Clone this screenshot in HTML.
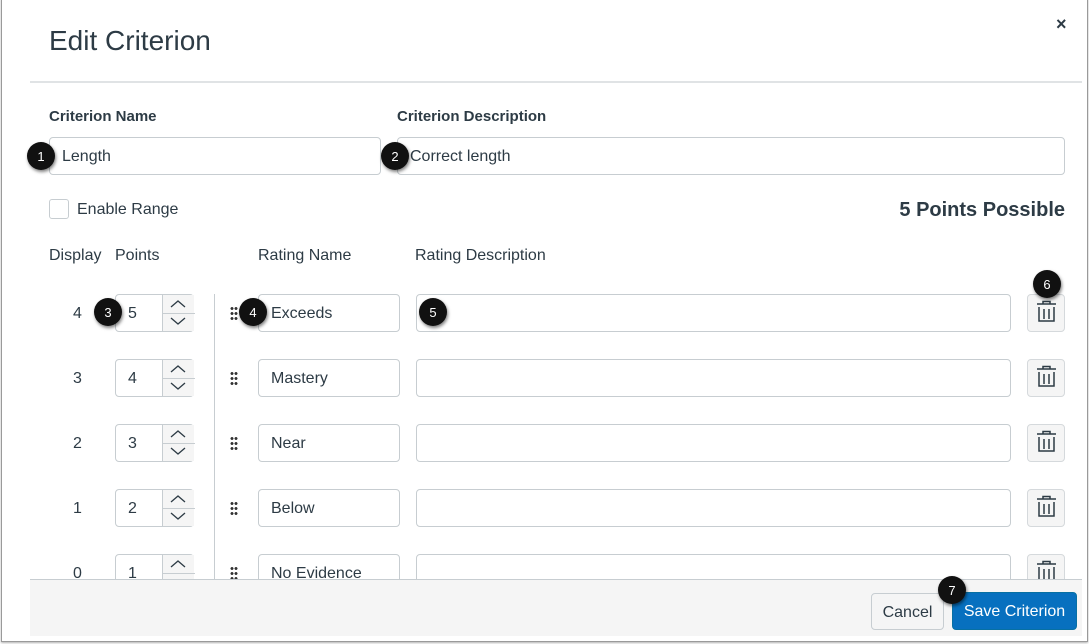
<!DOCTYPE html>
<html><head><meta charset="utf-8"><style>
*{box-sizing:border-box;margin:0;padding:0}
body{width:1089px;height:644px;background:#fff;font-family:"Liberation Sans",sans-serif;color:#2d3b45;position:relative;overflow:hidden}
.a{position:absolute}
.frame{left:1px;top:-2px;width:1087px;height:644px;border:1px solid #9a9a9a;box-shadow:0 1px 2px rgba(0,0,0,.3)}
.inp{position:absolute;border:1px solid #c7cdd1;border-radius:4px;background:#fff;font-size:16px;padding-left:12px;padding-top:2px;display:flex;align-items:center}
.lbl{position:absolute;font-size:15px;font-weight:bold}
.b{position:absolute;width:28px;height:28px;border-radius:50%;background:#111;color:#fff;font-size:13px;display:flex;align-items:center;justify-content:center;box-shadow:1px 2px 3px rgba(0,0,0,.5);z-index:5}
.hd{position:absolute;font-size:16px;color:#2d3b45}
.spin{position:absolute;width:79px;height:38px;border:1px solid #c7cdd1;border-radius:4px;background:#fff}
.spin .n{position:absolute;left:12px;top:10px;font-size:16px}
.spin .c{position:absolute;left:46px;top:0;width:32px;height:36px;border-left:1px solid #c7cdd1;background:#f5f5f5}
.spin .c i{position:absolute;left:0;top:18px;width:32px;border-top:1px solid #c7cdd1}
.tr{position:absolute;width:38px;height:38px;border:1px solid #d5d9dc;border-radius:4px;background:#f5f5f5}
.dots{position:absolute;width:8px;height:15px;background-image:radial-gradient(circle,#333 1.3px,transparent 1.6px);background-size:4px 5px}
</style></head><body>
<div class="a frame"></div>
<div class="a" style="left:49px;top:25px;font-size:28px;color:#2d3b45">Edit Criterion</div>
<div class="a" style="left:1056px;top:14px;font-size:18px;font-weight:bold">×</div>
<div class="a" style="left:30px;top:81px;width:1052px;border-top:2px solid #e0e3e5"></div>
<div class="lbl" style="left:49px;top:108px">Criterion Name</div>
<div class="lbl" style="left:397px;top:108px">Criterion Description</div>
<div class="inp" style="left:49px;top:137px;width:332px;height:38px">Length</div>
<div class="inp" style="left:397px;top:137px;width:668px;height:38px">Correct length</div>
<div class="b" style="left:27px;top:142px">1</div>
<div class="b" style="left:381px;top:142px">2</div>
<div class="a" style="left:49px;top:199px;width:20px;height:20px;border:1px solid #c7cdd1;border-radius:3px"></div>
<div class="a" style="left:77px;top:201px;font-size:16px">Enable Range</div>
<div class="a" style="right:24px;top:199px;font-size:20px;font-weight:bold">5 Points Possible</div>
<div class="hd" style="left:49px;top:247px">Display</div>
<div class="hd" style="left:115px;top:247px">Points</div>
<div class="hd" style="left:258px;top:247px">Rating Name</div>
<div class="hd" style="left:415px;top:247px">Rating Description</div>
<div class="a" style="left:214px;top:294px;height:290px;border-left:1px solid #c7cdd1"></div>

<div class="a" style="left:0;top:0;width:1089px;height:579px;overflow:hidden">
<div style="position:absolute;left:0;top:294px">
 <div class="hd" style="left:73px;top:11px">4</div>
 <div class="spin" style="left:115px;top:0"><div class="n">5</div><div class="c"><i></i></div></div>
 <div class="dots" style="left:230px;top:12px"></div>
 <div class="inp" style="left:258px;top:0;width:142px;height:38px">Exceeds</div>
 <div class="inp" style="left:416px;top:0;width:595px;height:38px"></div>
 <div class="tr" style="left:1027px;top:0"></div>
</div>
<div style="position:absolute;left:0;top:359px">
 <div class="hd" style="left:73px;top:11px">3</div>
 <div class="spin" style="left:115px;top:0"><div class="n">4</div><div class="c"><i></i></div></div>
 <div class="dots" style="left:230px;top:12px"></div>
 <div class="inp" style="left:258px;top:0;width:142px;height:38px">Mastery</div>
 <div class="inp" style="left:416px;top:0;width:595px;height:38px"></div>
 <div class="tr" style="left:1027px;top:0"></div>
</div>
<div style="position:absolute;left:0;top:424px">
 <div class="hd" style="left:73px;top:11px">2</div>
 <div class="spin" style="left:115px;top:0"><div class="n">3</div><div class="c"><i></i></div></div>
 <div class="dots" style="left:230px;top:12px"></div>
 <div class="inp" style="left:258px;top:0;width:142px;height:38px">Near</div>
 <div class="inp" style="left:416px;top:0;width:595px;height:38px"></div>
 <div class="tr" style="left:1027px;top:0"></div>
</div>
<div style="position:absolute;left:0;top:489px">
 <div class="hd" style="left:73px;top:11px">1</div>
 <div class="spin" style="left:115px;top:0"><div class="n">2</div><div class="c"><i></i></div></div>
 <div class="dots" style="left:230px;top:12px"></div>
 <div class="inp" style="left:258px;top:0;width:142px;height:38px">Below</div>
 <div class="inp" style="left:416px;top:0;width:595px;height:38px"></div>
 <div class="tr" style="left:1027px;top:0"></div>
</div>
<div style="position:absolute;left:0;top:554px">
 <div class="hd" style="left:73px;top:11px">0</div>
 <div class="spin" style="left:115px;top:0"><div class="n">1</div><div class="c"><i></i></div></div>
 <div class="dots" style="left:230px;top:12px"></div>
 <div class="inp" style="left:258px;top:0;width:142px;height:38px">No Evidence</div>
 <div class="inp" style="left:416px;top:0;width:595px;height:38px"></div>
 <div class="tr" style="left:1027px;top:0"></div>
</div>
<svg class="a" style="left:0;top:0" width="1089" height="644" fill="none" stroke="#2d3b45" stroke-width="1.3">
 <g>
 <path d="M171 307l7-6 7 6M171 318l7 6 7-6"/>
 <path d="M171 372l7-6 7 6M171 383l7 6 7-6"/>
 <path d="M171 437l7-6 7 6M171 448l7 6 7-6"/>
 <path d="M171 502l7-6 7 6M171 513l7 6 7-6"/>
 <path d="M171 567l7-6 7 6"/>
 </g>
 <g stroke-width="1.5">
 <path d="M1037 304h19M1043 304v-2.5h7v2.5M1039 307v14h15v-14M1044 309v10M1049 309v10"/>
 <path d="M1037 369h19M1043 369v-2.5h7v2.5M1039 372v14h15v-14M1044 374v10M1049 374v10"/>
 <path d="M1037 434h19M1043 434v-2.5h7v2.5M1039 437v14h15v-14M1044 439v10M1049 439v10"/>
 <path d="M1037 499h19M1043 499v-2.5h7v2.5M1039 502v14h15v-14M1044 504v10M1049 504v10"/>
 <path d="M1037 564h19M1043 564v-2.5h7v2.5M1039 567v14h15v-14M1044 569v10M1049 569v10"/>
 </g>
</svg>
</div>
<div class="b" style="left:94px;top:298px">3</div>
<div class="b" style="left:239px;top:298px">4</div>
<div class="b" style="left:419px;top:298px">5</div>
<div class="b" style="left:1033px;top:270px">6</div>

<div class="a" style="left:30px;top:579px;width:1052px;height:57px;background:#f5f5f5;border-top:1px solid #c7cdd1"></div>
<div class="a" style="left:871px;top:593px;width:73px;height:37px;border:1px solid #c7cdd1;border-radius:4px;background:#f5f5f5;font-size:16px;padding-top:2px;display:flex;align-items:center;justify-content:center">Cancel</div>
<div class="a" style="left:952px;top:592px;width:125px;height:38px;border:1px solid #0770a3;border-radius:4px;background:#0770bf;color:#fff;font-size:16px;padding-top:2px;display:flex;align-items:center;justify-content:center">Save Criterion</div>
<div class="b" style="left:938px;top:576px">7</div>
</body></html>
